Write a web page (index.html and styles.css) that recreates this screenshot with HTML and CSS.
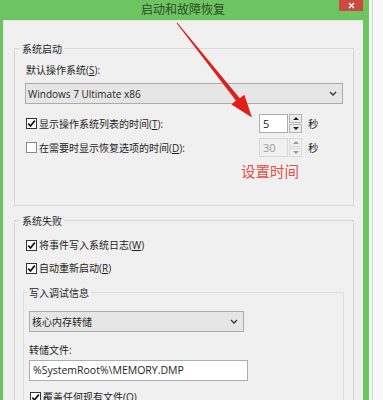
FILE: index.html
```html
<!DOCTYPE html>
<html>
<head>
<meta charset="utf-8">
<title>启动和故障恢复</title>
<link rel="stylesheet" href="styles.css">
</head>
<body>
<div class="screen">
  <div class="dialog">
    <div class="titlebar">
      <div class="title">启动和故障恢复</div>
      <div class="close"><svg width="7" height="7" viewBox="0 0 7 7"><path d="M1 1L6 6M6 1L1 6" stroke="#fff" stroke-width="1.4" fill="none"/></svg></div>
    </div>
    <div class="content">
      <div class="group g1">
        <div class="legend">系统启动</div>
        <div class="label">默认操作系统(<u>S</u>):</div>
        <div class="select os"><span>Windows 7 Ultimate x86</span><svg class="chev" width="8" height="5" viewBox="0 0 8 5"><path d="M1 1L4 4L7 1" stroke="#333" stroke-width="1.3" fill="none"/></svg></div>
        <div class="row spin-row">
          <span class="check on"><svg width="9" height="9" viewBox="0 0 9 9"><path d="M1.3 4.6L3.5 7L7.8 1.6" stroke="#111" stroke-width="1.7" fill="none"/></svg></span>
          <span class="rtext">显示操作系统列表的时间(<u>T</u>):</span>
          <div class="spinner">
            <div class="spin-input">5</div>
            <div class="spin-btns"><span class="sb"><i class="tri up"></i></span><span class="sb"><i class="tri down"></i></span></div>
          </div>
          <span class="unit">秒</span>
        </div>
        <div class="row spin-row r2">
          <span class="check"></span>
          <span class="rtext">在需要时显示恢复选项的时间(<u>D</u>):</span>
          <div class="spinner disabled">
            <div class="spin-input">30</div>
            <div class="spin-btns"><span class="sb"><i class="tri up"></i></span><span class="sb"><i class="tri down"></i></span></div>
          </div>
          <span class="unit">秒</span>
        </div>
        <div class="note">设置时间</div>
      </div>

      <div class="group g2">
        <div class="legend">系统失败</div>
        <div class="row crow first">
          <span class="check on"><svg width="9" height="9" viewBox="0 0 9 9"><path d="M1.3 4.6L3.5 7L7.8 1.6" stroke="#111" stroke-width="1.7" fill="none"/></svg></span>
          <span class="rtext">将事件写入系统日志(<u>W</u>)</span>
        </div>
        <div class="row crow second">
          <span class="check on"><svg width="9" height="9" viewBox="0 0 9 9"><path d="M1.3 4.6L3.5 7L7.8 1.6" stroke="#111" stroke-width="1.7" fill="none"/></svg></span>
          <span class="rtext">自动重新启动(<u>R</u>)</span>
        </div>
        <div class="group inner">
          <div class="legend">写入调试信息</div>
          <div class="select dump"><span>核心内存转储</span><svg class="chev" width="8" height="5" viewBox="0 0 8 5"><path d="M1 1L4 4L7 1" stroke="#333" stroke-width="1.3" fill="none"/></svg></div>
          <div class="label file">转储文件:</div>
          <div class="textbox">%SystemRoot%\MEMORY.DMP</div>
          <div class="row crow over">
            <span class="check on"><svg width="9" height="9" viewBox="0 0 9 9"><path d="M1.3 4.6L3.5 7L7.8 1.6" stroke="#111" stroke-width="1.7" fill="none"/></svg></span>
            <span class="rtext">覆盖任何现有文件(<u>O</u>)</span>
          </div>
        </div>
      </div>
    </div>
  </div>
  <div class="behind"><div class="behind-inner"></div></div>
</div>
<svg class="arrow" width="383" height="400" viewBox="0 0 383 400">
  <polygon points="176.6,23.3 235.8,100.4 231.4,104.6 252,117.5 244.3,94.8 239.8,98.3 177.4,22.7" fill="#df1f1c"/>
</svg>
</body>
</html>
```

FILE: styles.css
```css
* { box-sizing: border-box; }
html, body { margin: 0; padding: 0; }
body {
  width: 383px;
  height: 400px;
  overflow: hidden;
  position: relative;
  font-family: "Open Sans", "Noto Sans CJK SC", sans-serif;
  font-size: 10px;
  color: #1e1e1e;
  background: #f5f7f5;
}
u { text-decoration: underline; text-underline-offset: 1px; }

.screen { display: flex; height: 400px; }

.dialog {
  width: 369px;
  height: 400px;
  background: #6cc560;
  padding: 0 6px 0 3px;
  display: flex;
  flex-direction: column;
}
.titlebar {
  flex: none;
  height: 20px;
  display: grid;
  grid-template-columns: 1fr auto 1fr;
  align-items: start;
}
.title {
  grid-column: 2;
  font-family: "Noto Sans CJK SC", sans-serif;
  font-size: 12px;
  line-height: 15px;
  color: #2f4a2c;
  padding-top: 1px;
}
.close {
  grid-column: 3;
  justify-self: end;
  width: 24px;
  height: 11px;
  background: #cc4a3f;
  display: flex;
  align-items: center;
  justify-content: center;
}
.close svg { display: block; }

.content {
  flex: 1;
  min-height: 0;
  overflow: hidden;
  background: #f0f0f0;
  padding: 0 9px 0 10px;
  border-left: 1px solid #e2e2e2;
  border-top: 1px solid #e4e4e4;
}

.group { border: 1px solid #d8d8d8; }
.legend {
  display: block;
  width: fit-content;
  margin-top: -7px;
  line-height: 14px;
  height: 14px;
  padding: 0 2px;
  background: #f0f0f0;
}

.g1 { margin-top: 27px; padding: 0 10px 24px 10px; }
.g1 .legend { margin-left: -5px; }
.label { line-height: 14px; height: 14px; padding-left: 1px; margin-top: 7px; }

.select {
  height: 21px;
  border: 1px solid #acacac;
  background: #e6e6e6;
  display: flex;
  align-items: center;
  justify-content: space-between;
  padding: 0 5px 0 2px;
  white-space: nowrap;
}
.select.os { margin-top: 6px; }
.chev { display: block; }

.row { display: flex; align-items: center; white-space: nowrap; }
.spin-row { height: 19px; margin-top: 10px; padding-right: 23px; }
.spin-row.r2 { margin-top: 5px; }
.check {
  width: 11px;
  height: 11px;
  flex: none;
  margin-left: 1px;
  border: 1px solid #333;
  background: #fff;
  display: flex;
  align-items: center;
  justify-content: center;
}
.check svg { display: block; }
.r2 .check { border-color: #8a8a8a; }
.rtext { margin-left: 2px; line-height: 14px; }
.spin-row .rtext { flex: 1; }

.spinner { display: flex; height: 19px; width: 43px; flex: none; }
.spin-input {
  width: 29px;
  height: 19px;
  border: 1px solid #abadb3;
  background: #fff;
  padding-left: 3px;
  line-height: 17px;
  font-size: 11px;
}
.spin-btns {
  width: 13px;
  margin-left: 1px;
  display: flex;
  flex-direction: column;
  gap: 1px;
}
.sb {
  flex: 1;
  border: 1px solid #b5b5b5;
  background: #ececec;
  display: flex;
  align-items: center;
  justify-content: center;
}
.tri { display: block; width: 0; height: 0; border-left: 3px solid transparent; border-right: 3px solid transparent; }
.tri.up { border-bottom: 3px solid #222; }
.tri.down { border-top: 3px solid #222; }
.spinner.disabled .spin-input { background: #f0f0f0; border-color: #d9d9d9; color: #9a9a9a; }
.spinner.disabled .sb { border-color: #dadada; background: #f0f0f0; }
.spinner.disabled .tri.up { border-bottom-color: #9a9a9a; }
.spinner.disabled .tri.down { border-top-color: #9a9a9a; }
.unit { width: 12px; margin-left: 6px; font-size: 10.5px; }

.note {
  margin-top: 6px;
  padding-left: 216px;
  font-size: 14.5px;
  line-height: 18px;
  color: #e0504a;
}

.g2 { margin-top: 14px; height: 400px; }
.g2 > .legend { margin-left: 5px; }
.crow { height: 14px; margin-left: 10px; }
.crow.first { margin-top: 10px; }
.crow.second { margin-top: 9px; }

.inner { margin: 17px 9px 0 8px; border-color: #dedede; height: 200px; }
.inner .legend { margin-left: 3px; }
.select.dump { margin: 11px 0 0 5px; width: 215px; }
.label.file { margin: 11px 0 0 5px; padding-left: 0; }
.textbox {
  margin: 3px 0 0 5px;
  width: 219px;
  height: 21px;
  border: 1px solid #abadb3;
  background: #fff;
  padding-left: 3px;
  line-height: 19px;
  font-size: 10.5px;
}
.crow.over { margin: 9px 0 0 5px; }

.behind { flex: 1; padding-left: 3px; background: #f1f5f1; }
.behind-inner { height: 100%; border-left: 1px solid #d4d4d4; background: #f8f8f8; }

.arrow { position: absolute; left: 0; top: 0; pointer-events: none; }
```
